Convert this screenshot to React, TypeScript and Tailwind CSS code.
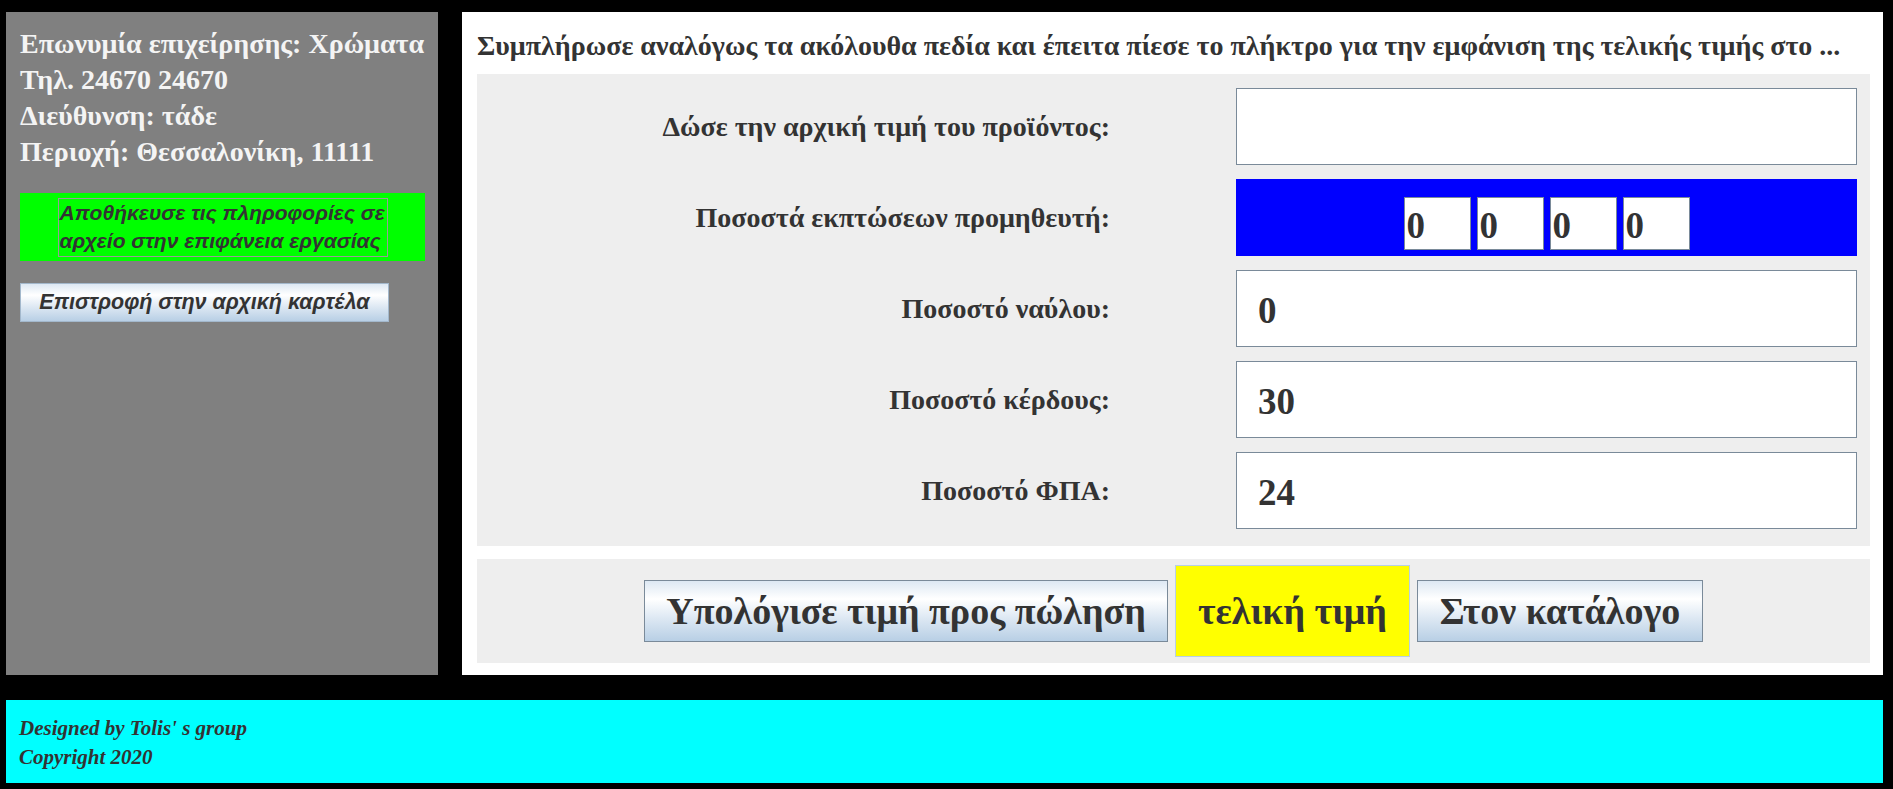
const SERIF = "font-['Liberation_Serif','Times_New_Roman',serif]";

const ROWS = [
  { label: "Δώσε την αρχική τιμή του προϊόντος:", value: "" },
  { label: "Ποσοστά εκπτώσεων προμηθευτή:", value: null },
  { label: "Ποσοστό ναύλου:", value: "0" },
  { label: "Ποσοστό κέρδους:", value: "30" },
  { label: "Ποσοστό ΦΠΑ:", value: "24" },
];

const DISCOUNTS = ["0", "0", "0", "0"];

function MetalButton({ children, className }: { children: React.ReactNode; className?: string }) {
  return (
    <button
      className={`border border-[#7a8a99] bg-[linear-gradient(180deg,#dde8f3_0%,#ffffff_30%,#dde8f3_62%,#b8cfe5_100%)] text-[#333333] ${className ?? ""}`}
    >
      {children}
    </button>
  );
}

export default function App() {
  return (
    <div className="flex h-[789px] w-[1893px] flex-col bg-black pl-[6px] pr-[10px] pt-[12px]">
      <div className="flex h-[663px] gap-[24px]">
        {/* Company info */}
        <aside className="flex w-[432px] flex-col bg-[#808080] px-[14px] pt-[14px]">
          <div className={`${SERIF} text-[28px] font-bold leading-[36px] text-[#f4f4f4] whitespace-nowrap`}>
            <p>Επωνυμία επιχείρησης: Χρώματα</p>
            <p>Τηλ. 24670 24670</p>
            <p>Διεύθυνση: τάδε</p>
            <p>Περιοχή: Θεσσαλονίκη, 11111</p>
          </div>

          <button className="mt-[23px] flex h-[68px] w-[405px] items-center justify-center bg-[#00ff00]">
            <span className="block h-[59px] w-[330px] overflow-hidden border border-[#9a9a9a] pl-[1px] text-left font-['Liberation_Sans',Arial,sans-serif] text-[21px] font-bold italic leading-[28px] text-[#333333] whitespace-nowrap">
              Αποθήκευσε τις πληροφορίες σε
              <br />
              αρχείο στην επιφάνεια εργασίας
            </span>
          </button>

          <button className="mt-[22px] h-[39px] w-[369px] border border-[#a3b8cc] bg-[linear-gradient(180deg,#dde8f3_0%,#ffffff_30%,#dde8f3_62%,#b8cfe5_100%)] font-['Liberation_Sans',Arial,sans-serif] text-[21.5px] font-bold italic text-[#333333] whitespace-nowrap">
            Επιστροφή στην αρχική καρτέλα
          </button>
        </aside>

        {/* Price form */}
        <main className="flex flex-1 flex-col bg-white pl-[15px] pr-[13px]">
          <h1 className={`${SERIF} h-[62px] pt-[20px] text-[28px] font-bold leading-[28px] text-[#333333] whitespace-nowrap`}>
            Συμπλήρωσε αναλόγως τα ακόλουθα πεδία και έπειτα πίεσε το πλήκτρο για την εμφάνιση της τελικής τιμής στο ...
          </h1>

          <section className="flex h-[472px] flex-col gap-[14px] bg-[#eeeeee] pt-[14px]">
            {ROWS.map((row) => (
              <div key={row.label} className="flex h-[77px] items-center">
                <label className={`${SERIF} w-[633px] text-right text-[28px] font-bold text-[#333333] whitespace-nowrap`}>
                  {row.label}
                </label>
                {row.value === null ? (
                  <div className="ml-[126px] flex h-full w-[621px] justify-center gap-[6px] bg-[#0000ff] pt-[18px]">
                    {DISCOUNTS.map((d, i) => (
                      <div
                        key={i}
                        className={`${SERIF} flex h-[53px] w-[67px] items-center border border-[#7a8a99] bg-white pl-[2px] pt-[4px] text-[37px] font-bold text-[#333333]`}
                      >
                        {d}
                      </div>
                    ))}
                  </div>
                ) : (
                  <div
                    className={`${SERIF} ml-[126px] flex h-full w-[621px] items-center border border-[#7a8a99] bg-white pl-[21px] pt-[4px] text-[37px] font-bold text-[#333333]`}
                  >
                    {row.value}
                  </div>
                )}
              </div>
            ))}
          </section>

          <section className={`${SERIF} mt-[13px] flex h-[104px] items-center justify-center gap-[7px] bg-[#eeeeee] text-[38px] font-bold text-[#333333] whitespace-nowrap`}>
            <MetalButton className="h-[62px] w-[524px]">Υπολόγισε τιμή προς πώληση</MetalButton>
            <div className="flex h-[92px] w-[235px] items-center justify-center border border-[#b8cfe5] bg-[#ffff00]">
              τελική τιμή
            </div>
            <MetalButton className="h-[62px] w-[286px]">Στον κατάλογο</MetalButton>
          </section>
        </main>
      </div>

      <footer className={`${SERIF} mt-[25px] h-[83px] bg-[#00ffff] pl-[13px] pt-[14px] text-[21px] font-bold italic leading-[29px] text-[#333333]`}>
        <p>Designed by Tolis' s group</p>
        <p>Copyright 2020</p>
      </footer>
    </div>
  );
}
